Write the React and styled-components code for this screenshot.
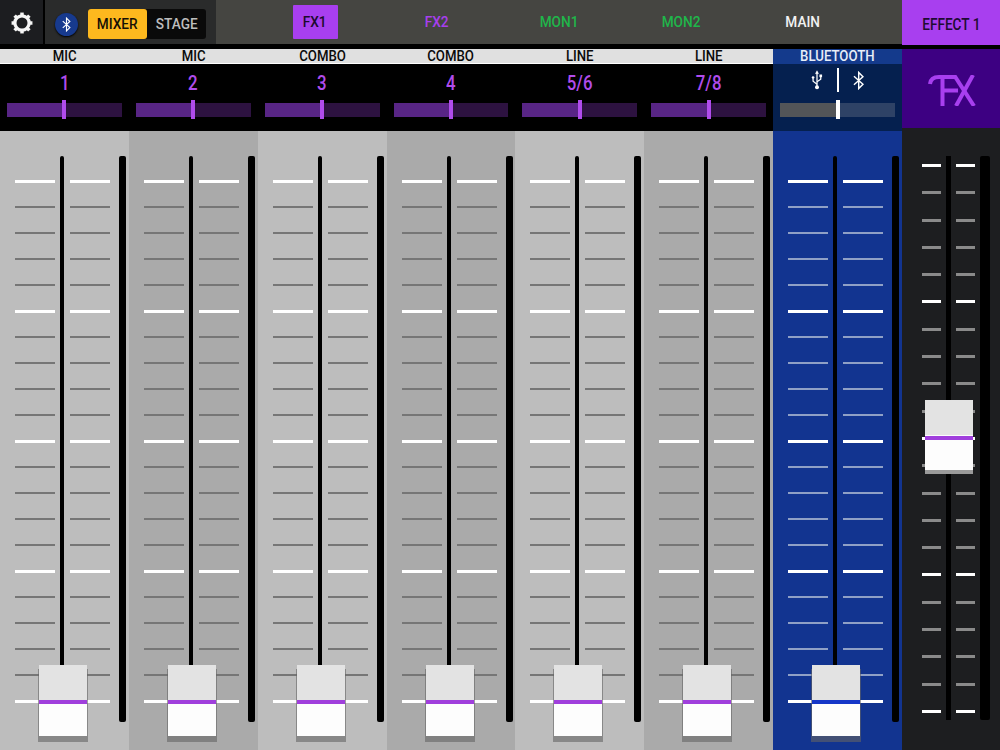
import React from "react";
import styled, { createGlobalStyle } from "styled-components";

const Global = createGlobalStyle`
  html, body { margin: 0; padding: 0; background: #000; }
  body { width: 1000px; height: 750px; overflow: hidden; font-family: Roboto, "Liberation Sans", sans-serif; }
  * { box-sizing: border-box; }
`;

const Page = styled.div`
  width: 1000px;
  height: 750px;
  display: grid;
  grid-template-columns: 902px 98px;
  background: #000;
  overflow: hidden;
`;
const MixerColumn = styled.div`
  display: grid;
  grid-template-rows: 44px 87px 619px;
`;
const EffectColumn = styled.div`
  display: grid;
  grid-template-rows: 45px 83px 1fr;
  height: 750px;
`;

const Narrow = styled.span`
  display: inline-block;
  transform: scaleX(${(p) => p.$x || 0.88});
  white-space: nowrap;
`;

const TopBar = styled.div`
  display: flex;
  background: #000;
`;
const GearBox = styled.div`
  width: 43px;
  background: #1c1d20;
  display: flex;
  align-items: center;
  justify-content: center;
  padding: 1px 0 0 1px;
`;
const ModeBox = styled.div`
  width: 171px;
  margin-left: 2px;
  background: #2a2b2b;
  display: flex;
  align-items: center;
  padding: 4px 0 0 10px;
`;
const BtBadge = styled.div`
  width: 23px;
  height: 23px;
  border-radius: 50%;
  background: #173a8e;
  box-shadow: 0 1px 2px #000;
  display: flex;
  align-items: center;
  justify-content: center;
  margin-right: 10px;
`;
const Segment = styled.div`
  display: flex;
  width: 118px;
  height: 30px;
  background: #0a0a0a;
  border-radius: 3px;
  font-size: 15.5px;
  font-weight: 500;
`;
const SegmentItem = styled.div`
  flex: ${(p) => (p.$active ? "0 0 59px" : "1")};
  display: flex;
  align-items: center;
  justify-content: center;
  border-radius: 3px;
  background: ${(p) => (p.$active ? "#fdb81e" : "transparent")};
  color: ${(p) => (p.$active ? "#161006" : "#bdbdbd")};
`;
const Tabs = styled.div`
  flex: 1;
  background: #454541;
  display: grid;
  grid-template-columns: repeat(5, 122px);
  padding-left: 38px;
`;
const Tab = styled.div`
  display: flex;
  align-items: center;
  justify-content: center;
  color: ${(p) => p.$color};
  font-size: 15.5px;
  font-weight: 500;
  padding-bottom: 1px;
`;
const TabActive = styled.div`
  width: 45px;
  height: 34px;
  background: #a83fef;
  color: #1c0a2c;
  border-radius: 1px;
  display: flex;
  align-items: center;
  justify-content: center;
`;
const EffectTab = styled.div`
  background: #a83fef;
  color: #1f0b33;
  font-size: 17px;
  font-weight: 500;
  display: flex;
  align-items: center;
  justify-content: center;
  padding-top: 3px;
`;

const Heads = styled.div`
  display: grid;
  grid-template-columns: repeat(7, 1fr);
  padding-top: 5px;
  background: #000;
`;
const Head = styled.div`
  display: flex;
  flex-direction: column;
  background: ${(p) => (p.$bt ? "#05204f" : "#000")};
`;
const HeadLabel = styled.div`
  height: 15px;
  line-height: 15px;
  text-align: center;
  font-size: 15px;
  font-weight: 500;
  background: ${(p) => (p.$bt ? "#143a8c" : "#e0e0e0")};
  color: ${(p) => (p.$bt ? "#e8eef8" : "#0a0a0a")};
  border-bottom: ${(p) => (p.$bt ? "none" : "1px solid #fff")};
`;
const HeadTitle = styled.div`
  height: 39px;
  padding-top: 7px;
  display: flex;
  align-items: flex-start;
  justify-content: center;
  color: #b04cec;
  font-size: 20.5px;
  font-weight: 500;
  line-height: 24px;
`;
const SourceRow = styled.div`
  height: 39px;
  padding-top: 4px;
`;
const SourceIcons = styled.div`
  height: 24px;
  display: flex;
  align-items: center;
  justify-content: center;
  gap: 14px;
`;
const SourceDivider = styled.div`
  width: 2px;
  height: 24px;
  background: #fff;
`;
const Pan = styled.div`
  position: relative;
  height: 14px;
  margin: 0 7px;
  display: grid;
  grid-template-columns: 1fr 1fr;
`;
const PanSide = styled.div`
  background: ${(p) => p.$c};
`;
const PanThumb = styled.div`
  position: absolute;
  left: calc(50% - 2px);
  top: -3px;
  width: 4px;
  height: 19px;
  background: ${(p) => p.$c};
`;

const FxLogoBox = styled.div`
  margin-top: 4px;
  background: #3d0082;
  display: flex;
  align-items: center;
  justify-content: center;
  padding: 3px 0 0 1px;
`;

const Strips = styled.div`
  display: grid;
  grid-template-columns: repeat(7, 1fr);
`;
const Strip = styled.div`
  position: relative;
  background: ${(p) => p.$bg};
  padding: 25px 0 0 15px;
  display: grid;
  grid-template-columns: 40px 15px 40px 9px 7px;
  grid-template-rows: 566px;
`;
const Scale = styled.div`
  display: flex;
  flex-direction: column;
  padding-top: 24px;
`;
const TickSlot = styled.div`
  height: 26px;
  flex: none;
`;
const Tick = styled.div`
  margin-top: ${(p) => (p.$major ? "-0.5px" : "0")};
  height: ${(p) => (p.$major ? "3px" : "2px")};
  background: ${(p) => (p.$major ? "#fff" : p.$bt ? "#8fa0c6" : "#767676")};
`;
const TrackCell = styled.div`
  display: flex;
  justify-content: center;
`;
const Track = styled.div`
  width: 4px;
  background: #000;
  border-radius: 2px 2px 0 0;
  margin-right: 1px;
`;
const Spacer = styled.div``;
const Meter = styled.div`
  background: #000;
  border-radius: 2px;
`;
const Knob = styled.div`
  position: absolute;
  left: 39px;
  top: 534px;
  width: 48px;
  height: 71px;
  background: linear-gradient(#e3e3e3 0 50%, #fdfdfd 50% 100%);
  box-shadow: 0 5px 0 1px rgba(100, 100, 100, 0.6);
`;
const KnobLine = styled.div`
  position: absolute;
  left: 0;
  right: 0;
  top: ${(p) => p.$top || 35}px;
  height: 4px;
  background: ${(p) => p.$c};
`;

const FxStrip = styled.div`
  position: relative;
  background: #1d1e20;
  padding: 28px 10px 0 20px;
  display: grid;
  grid-template-columns: 19px 15px 19px 5px 10px;
  grid-template-rows: 564px;
`;
const FxScale = styled.div`
  display: flex;
  flex-direction: column;
  justify-content: space-between;
  padding: 8px 0 7px;
  height: 564px;
`;
const FxTick = styled.div`
  height: 3px;
  flex: none;
  background: ${(p) => (p.$major ? "#fff" : "#8a8a8a")};
`;
const FxTrack = styled.div`
  width: 5px;
  background: #000;
  margin: 0 auto;
`;
const FxKnob = styled.div`
  position: absolute;
  left: 23px;
  top: 272px;
  width: 48px;
  height: 74px;
  background: linear-gradient(#e3e3e3 0 50%, #fdfdfd 50% 100%);
  border-bottom: 4px solid #9a9a9a;
`;

const channels = [
  ["MIC", "1"],
  ["MIC", "2"],
  ["COMBO", "3"],
  ["COMBO", "4"],
  ["LINE", "5/6"],
  ["LINE", "7/8"],
];
const ticks = Array.from({ length: 21 }, (_, i) => i % 5 === 0);
const fxTicks = Array.from({ length: 21 }, (_, i) => i % 5 === 0);

const GearIcon = () => (
  <svg width="22" height="22" viewBox="0 0 24 24" fill="none" stroke="#f6f6f6">
    <circle cx="12" cy="12" r="7.8" strokeWidth="3.6" />
    {[0, 45, 90, 135, 180, 225, 270, 315].map((a) => (
      <path key={a} d="M12 0.6 V4" strokeWidth="3.8" transform={`rotate(${a} 12 12)`} />
    ))}
  </svg>
);
const BluetoothIcon = ({ size = 16, color = "#fff", w = 1.6 }) => (
  <svg width={size * 0.6} height={size} viewBox="0 0 12 20" fill="none" stroke={color} strokeWidth={w}>
    <path d="M1 5.5 L10.5 14 L6 18.5 V1.5 L10.5 6 L1 14.5" />
  </svg>
);
const UsbIcon = () => (
  <svg width="12" height="20" viewBox="0 0 13 24" fill="#fff" stroke="#fff">
    <path d="M6.5 2 V20" strokeWidth="1.5" />
    <path d="M4.6 4.4 L6.5 0.8 L8.4 4.4 Z" strokeWidth="0.5" />
    <path d="M6.5 17 L1.8 13.5 V10" strokeWidth="1.5" fill="none" />
    <path d="M6.5 14 L11 11 V8" strokeWidth="1.5" fill="none" />
    <circle cx="1.8" cy="9" r="1.6" strokeWidth="0" />
    <rect x="9.4" y="5.4" width="3.2" height="3.2" strokeWidth="0" />
    <circle cx="6.5" cy="20.8" r="2.4" strokeWidth="0" />
  </svg>
);
const FxLogo = () => (
  <svg width="48" height="31" viewBox="0 0 48 31" fill="none" stroke="#a83fef" strokeWidth="4" role="img" aria-label="FX">
    <path d="M2 9 C2.5 4 6 2 11 2 H27" />
    <path d="M14.5 2 V31" />
    <path d="M14.5 15.5 H30" />
    <path d="M26 0 L46 31" />
    <path d="M45 0 L28 31" />
  </svg>
);

function ChannelStrip({ bg, bt }) {
  const scale = (
    <Scale>
      {ticks.map((m, i) => (
        <TickSlot key={i}>
          <Tick $major={m} $bt={bt} />
        </TickSlot>
      ))}
    </Scale>
  );
  return (
    <Strip $bg={bg}>
      {scale}
      <TrackCell>
        <Track />
      </TrackCell>
      {scale}
      <Spacer />
      <Meter />
      <Knob>
        <KnobLine $c={bt ? "#1537c8" : "#a03fdc"} />
      </Knob>
    </Strip>
  );
}

export default function App() {
  const fxScale = (
    <FxScale>
      {fxTicks.map((m, i) => (
        <FxTick key={i} $major={m} />
      ))}
    </FxScale>
  );
  return (
    <Page>
      <Global />
      <MixerColumn>
        <TopBar>
          <GearBox>
            <GearIcon />
          </GearBox>
          <ModeBox>
            <BtBadge>
              <BluetoothIcon size={15} w={1.5} />
            </BtBadge>
            <Segment>
              <SegmentItem $active><Narrow>MIXER</Narrow></SegmentItem>
              <SegmentItem><Narrow>STAGE</Narrow></SegmentItem>
            </Segment>
          </ModeBox>
          <Tabs>
            <Tab>
              <TabActive><Narrow>FX1</Narrow></TabActive>
            </Tab>
            <Tab $color="#a83fef"><Narrow>FX2</Narrow></Tab>
            <Tab $color="#1fb64a"><Narrow>MON1</Narrow></Tab>
            <Tab $color="#1fb64a"><Narrow>MON2</Narrow></Tab>
            <Tab $color="#f2f2f2"><Narrow>MAIN</Narrow></Tab>
          </Tabs>
        </TopBar>

        <Heads>
          {channels.map(([label, num], i) => (
            <Head key={i}>
              <HeadLabel><Narrow>{label}</Narrow></HeadLabel>
              <HeadTitle><Narrow $x={0.82}>{num}</Narrow></HeadTitle>
              <Pan>
                <PanSide $c="#582585" />
                <PanSide $c="#2d1240" />
                <PanThumb $c="#b04cec" />
              </Pan>
            </Head>
          ))}
          <Head $bt>
            <HeadLabel $bt><Narrow>BLUETOOTH</Narrow></HeadLabel>
            <SourceRow>
              <SourceIcons>
                <UsbIcon />
                <SourceDivider />
                <BluetoothIcon size={19} w={1.5} />
              </SourceIcons>
            </SourceRow>
            <Pan>
              <PanSide $c="#535558" />
              <PanSide $c="#2e4266" />
              <PanThumb $c="#fff" />
            </Pan>
          </Head>
        </Heads>

        <Strips>
          {channels.map((_, i) => (
            <ChannelStrip key={i} bg={i % 2 ? "#aaaaaa" : "#bdbdbd"} />
          ))}
          <ChannelStrip bg="#123490" bt />
        </Strips>
      </MixerColumn>

      <EffectColumn>
        <EffectTab><Narrow $x={0.8}>EFFECT 1</Narrow></EffectTab>
        <FxLogoBox>
          <FxLogo />
        </FxLogoBox>
        <FxStrip>
          {fxScale}
          <FxTrack />
          {fxScale}
          <Spacer />
          <Meter />
          <FxKnob>
            <KnobLine $c="#a03fdc" $top={36} />
          </FxKnob>
        </FxStrip>
      </EffectColumn>
    </Page>
  );
}
